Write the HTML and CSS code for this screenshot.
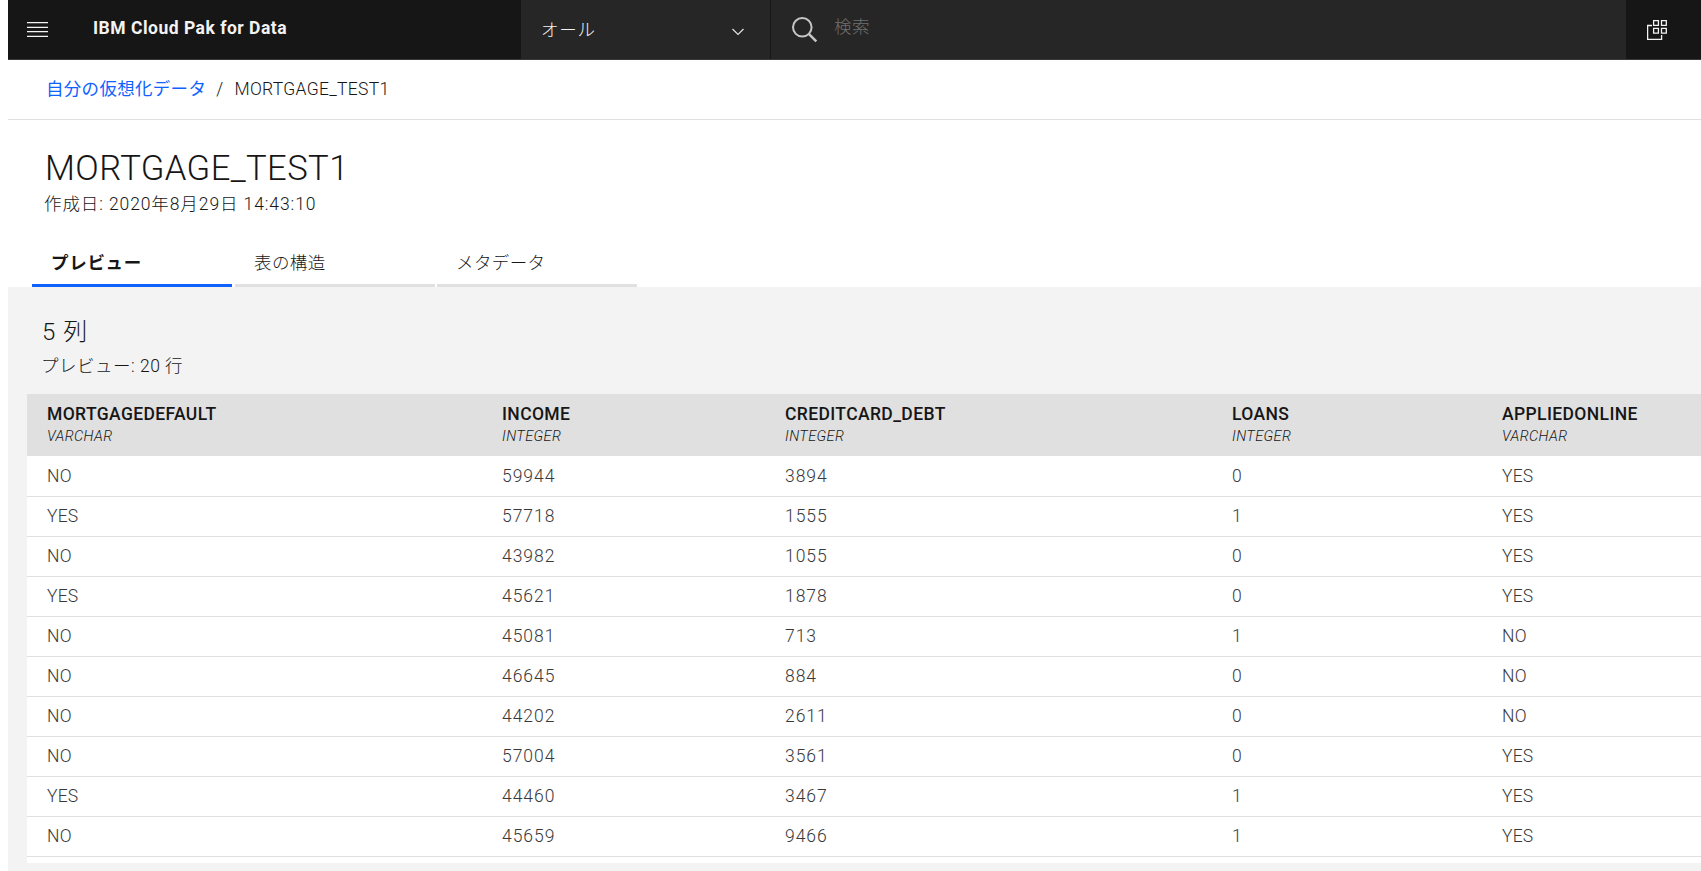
FILE: index.html
```html
<!doctype html>
<html lang="ja">
<head>
<meta charset="utf-8">
<title>IBM Cloud Pak for Data</title>
<link rel="stylesheet" href="styles.css">
</head>
<body>

    <header class="topbar">
        <button class="menu">
            <svg width="22" height="18" viewBox="0 0 22 18"><path d="M0 1.6h21M0 6.400h21M0 10.600h21M0 15.400h21" stroke="#f3f3f3" stroke-width="1.400"/></svg>
        </button>
        <div class="brand">IBM Cloud Pak for Data</div>
        <div class="scope">
            <span class="scope-name">オール</span>
            <svg width="14" height="10" viewBox="0 0 14 10"><path d="M1.5 2l5.5 5.5L12.500 2" fill="none" stroke="#e0e0e0" stroke-width="1.2"/></svg>
        </div>
        <div class="search">
            <svg width="28" height="28" viewBox="0 0 28 28"><circle cx="12.300" cy="11.300" r="9.300" fill="none" stroke="#c6c6c6" stroke-width="2"/><path d="M18.800 17.800l7.500 7.500" stroke="#c6c6c6" stroke-width="2.600"/></svg>
            <span class="search-hint">検索</span>
        </div>
        <div class="switcher">
            <svg width="20" height="20" viewBox="0 0 20 20" fill="none" stroke="#f3f3f3" stroke-width="1.300"><path d="M6.600.600h4.800v4.800H6.600zM14.500.600h4.800v4.800h-4.800zM6.600 8.300h4.800v4.800H6.600zM14.500 8.300h4.800v4.800h-4.800z"/><path d="M5 5.500H.6v14h14V15"/></svg>
        </div>
    </header>

    <nav class="breadcrumb">
        <a href="#">自分の仮想化データ</a>
        <span class="slash">/</span>
        <span class="current">MORTGAGE_TEST1</span>
    </nav>

    <div class="page-head">
        <h1>MORTGAGE_TEST1</h1>
        <p class="created">作成日: 2020年8月29日 14:43:10</p>
        <ul class="tabs">
            <li class="selected">プレビュー</li>
            <li>表の構造</li>
            <li>メタデータ</li>
        </ul>
    </div>

    <main>
        <h2>5 列</h2>
        <p class="rows">プレビュー: 20 行</p>
        <div class="table-wrap">
            <table>
                <colgroup>
                    <col class="c1"><col class="c2"><col class="c3"><col class="c4"><col class="c5">
                </colgroup>
                <thead>
                    <tr>
                        <th><b>MORTGAGEDEFAULT</b><i>VARCHAR</i></th>
                        <th><b>INCOME</b><i>INTEGER</i></th>
                        <th><b>CREDITCARD_DEBT</b><i>INTEGER</i></th>
                        <th><b>LOANS</b><i>INTEGER</i></th>
                        <th><b>APPLIEDONLINE</b><i>VARCHAR</i></th>
                    </tr>
                </thead>
                <tbody>
                    <tr><td>NO</td><td class="num">59944</td><td class="num">3894</td><td class="num">0</td><td>YES</td></tr>
                    <tr><td>YES</td><td class="num">57718</td><td class="num">1555</td><td class="num">1</td><td>YES</td></tr>
                    <tr><td>NO</td><td class="num">43982</td><td class="num">1055</td><td class="num">0</td><td>YES</td></tr>
                    <tr><td>YES</td><td class="num">45621</td><td class="num">1878</td><td class="num">0</td><td>YES</td></tr>
                    <tr><td>NO</td><td class="num">45081</td><td class="num">713</td><td class="num">1</td><td>NO</td></tr>
                    <tr><td>NO</td><td class="num">46645</td><td class="num">884</td><td class="num">0</td><td>NO</td></tr>
                    <tr><td>NO</td><td class="num">44202</td><td class="num">2611</td><td class="num">0</td><td>NO</td></tr>
                    <tr><td>NO</td><td class="num">57004</td><td class="num">3561</td><td class="num">0</td><td>YES</td></tr>
                    <tr><td>YES</td><td class="num">44460</td><td class="num">3467</td><td class="num">1</td><td>YES</td></tr>
                    <tr><td>NO</td><td class="num">45659</td><td class="num">9466</td><td class="num">1</td><td>YES</td></tr>
                </tbody>
            </table>
        </div>
    </main>

</body>
</html>
```
FILE: styles.css
```css
*
{
    box-sizing:border-box;
}
html
{
    height:100%;
    overflow:hidden;
    background:#fff;
}
body
{
    display:flex;
    flex-direction:column;
    height:100%;
    margin:0 0 0 8px;
    font:normal 300 17.5px/22px Roboto, "Noto Sans CJK JP", sans-serif;
    color:#161616;
}
h1, h2, p, ul
{
    margin:0;
    padding:0;
    font-weight:300;
}
svg
{
    display:block;
}

/* top bar */
.topbar
{
    display:flex;
    flex:none;
    height:60px;
    border-bottom:1px solid #393939;
    background:#161616;
    color:#f3f3f3;
}
.menu
{
    width:85px;
    padding:21px 0 0 19px;
    border:none;
    background:none;
    display:flex;
}
.brand
{
    width:428px;
    line-height:57px;
    font-weight:700;
    letter-spacing:.5px;
}
.scope
{
    display:flex;
    justify-content:space-between;
    width:250px;
    padding:0 25px 0 20px;
    border-right:1px solid #161616;
    background:#262626;
    line-height:60px;
    letter-spacing:.7px;
}
.scope svg
{
    margin-top:27px;
}
.search
{
    display:flex;
    flex:1;
    padding-left:19px;
    background:#262626;
}
.search svg
{
    margin:16px 16px 0 0;
}
.search-hint
{
    line-height:55px;
    letter-spacing:.4px;
    color:#6f6f6f;
}
.switcher
{
    width:75px;
    padding:20px 0 0 21px;
}

/* breadcrumb */
.breadcrumb
{
    display:flex;
    flex:none;
    height:60px;
    padding-left:38px;
    border-bottom:1px solid #e0e0e0;
    line-height:59px;
    letter-spacing:.3px;
}
.breadcrumb a
{
    color:#0f62fe;
    font-weight:400;
    text-decoration:none;
}
.slash
{
    margin:0 11px 0 10px;
}

/* title and tabs */
.page-head
{
    flex:none;
    height:167px;
    padding:27px 0 0 24px;
}
h1
{
    padding-left:13px;
    font-size:34.6px;
    line-height:42px;
    letter-spacing:.4px;
}
.created
{
    margin-top:4px;
    padding-left:12px;
    letter-spacing:.9px;
}
.tabs
{
    display:flex;
    margin-top:27px;
    list-style:none;
}
.tabs li
{
    width:200px;
    height:45px;
    margin-right:2px;
    padding-left:19px;
    border-bottom:3px solid #e0e0e0;
    line-height:43px;
    letter-spacing:.4px;
}
.tabs .selected
{
    margin-right:3px;
    border-color:#0f62fe;
    font-weight:700;
    letter-spacing:.7px;
}

/* preview table */
main
{
    flex:1;
    padding:30px 0 0 19px;
    background:#f3f3f3;
}
h2
{
    padding-left:15px;
    font-size:24px;
    line-height:31px;
    letter-spacing:1px;
}
.rows
{
    margin:7px 0 17px;
    padding-left:14px;
    letter-spacing:.5px;
}
.table-wrap
{
    height:469px;
    overflow:hidden;
    background:#fff;
}
table
{
    width:1674px;
    table-layout:fixed;
    border-collapse:separate;
    border-spacing:0;
}
.c1
{
    width:455px;
}
.c2
{
    width:283px;
}
.c3
{
    width:447px;
}
.c4
{
    width:270px;
}
th
{
    height:62px;
    padding:9px 0 0 20px;
    background:#e0e0e0;
    text-align:left;
    vertical-align:top;
}
th b
{
    display:block;
    font-weight:500;
    line-height:23px;
    letter-spacing:.38px;
}
th i
{
    display:block;
    font-size:14.5px;
    font-weight:300;
    line-height:22px;
    letter-spacing:.4px;
}
td
{
    height:40px;
    padding:0 0 0 20px;
    border-bottom:1px solid #e0e0e0;
    line-height:39px;
    letter-spacing:.2px;
    color:#393939;
}
.num
{
    letter-spacing:.95px;
}
tbody tr:first-child td
{
    height:41px;
    line-height:40px;
}
```
